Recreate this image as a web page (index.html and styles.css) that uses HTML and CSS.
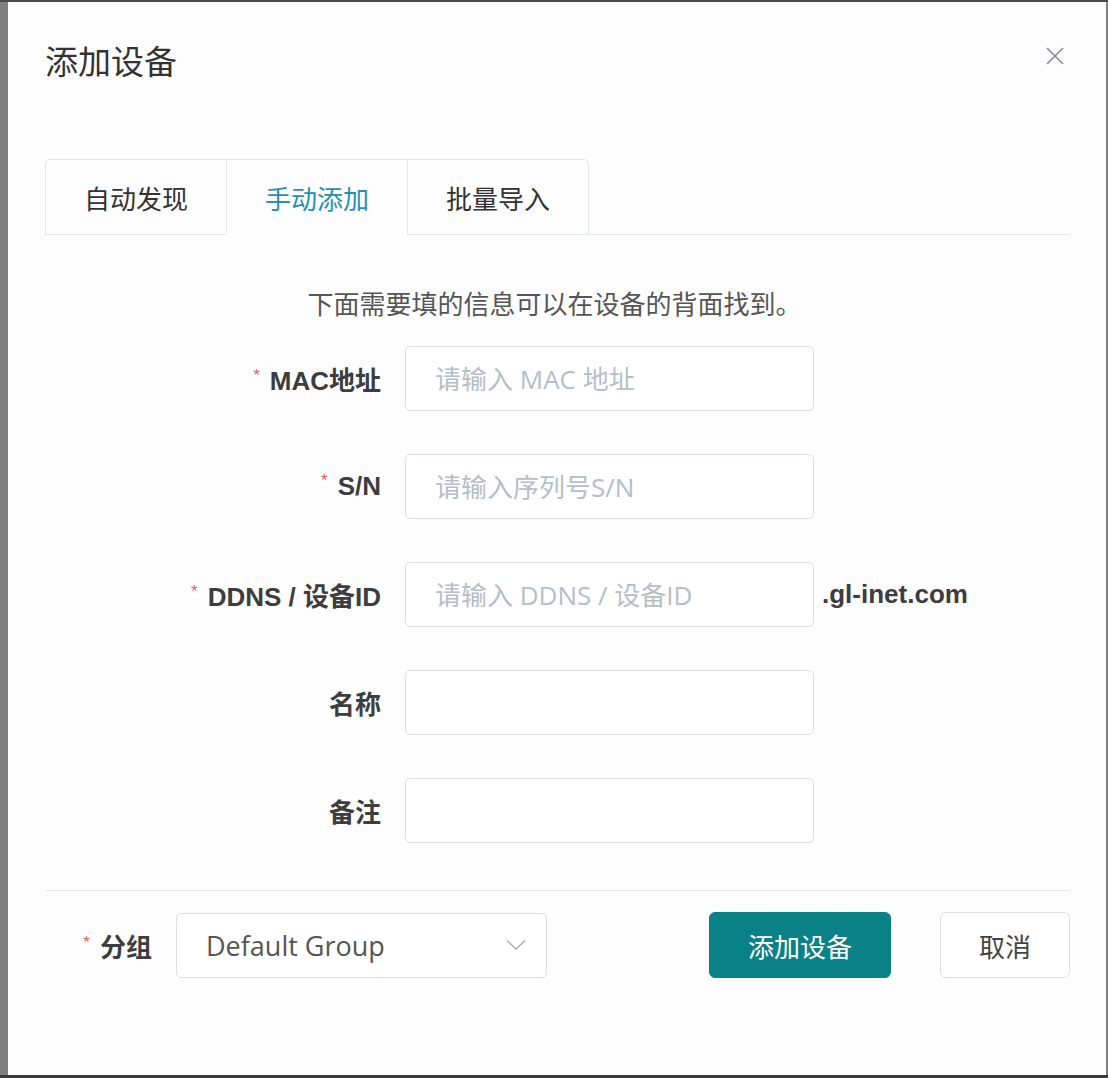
FILE: index.html
```html
<!DOCTYPE html>
<html lang="zh-CN">
<head>
  <meta charset="UTF-8">
  <meta name="viewport" content="width=device-width, initial-scale=1.0">
  <title>添加设备</title>
  <link rel="stylesheet" href="styles.css">
</head>
<body>
  <div class="backdrop">
    <div class="dialog">
      <div class="dialog-header">
        <span class="dialog-title">添加设备</span>
        <svg class="dialog-close" width="20" height="20" viewBox="0 0 20 20">
          <path d="M2 2L18 18M18 2L2 18" stroke="#8a8d94" stroke-width="1.6" fill="none"/>
        </svg>
      </div>

      <div class="tabs">
        <div class="tab">自动发现</div>
        <div class="tab active">手动添加</div>
        <div class="tab">批量导入</div>
      </div>

      <p class="hint">下面需要填的信息可以在设备的背面找到。</p>

      <div class="form">
        <div class="form-row">
          <label class="form-label required">MAC地址</label>
          <input class="input" type="text" placeholder="请输入 MAC 地址">
        </div>
        <div class="form-row">
          <label class="form-label required">S/N</label>
          <input class="input" type="text" placeholder="请输入序列号S/N">
        </div>
        <div class="form-row">
          <label class="form-label required">DDNS / 设备ID</label>
          <input class="input" type="text" placeholder="请输入 DDNS / 设备ID">
          <span class="suffix">.gl-inet.com</span>
        </div>
        <div class="form-row">
          <label class="form-label">名称</label>
          <input class="input" type="text">
        </div>
        <div class="form-row">
          <label class="form-label">备注</label>
          <input class="input" type="text">
        </div>
      </div>

      <div class="dialog-footer">
        <label class="footer-label required">分组</label>
        <div class="select">
          <span>Default Group</span>
          <svg width="20" height="12" viewBox="0 0 20 12">
            <path d="M1 1.5L10 10L19 1.5" stroke="#a8abb2" stroke-width="1.3" fill="none"/>
          </svg>
        </div>
        <div class="buttons">
          <button class="btn btn-primary">添加设备</button>
          <button class="btn">取消</button>
        </div>
      </div>
    </div>
  </div>
</body>
</html>
```

FILE: styles.css
```css
body {
  margin: 0;
  background-color: #7f7f7f;
  font-family: "Noto Sans CJK SC", sans-serif;
}

.backdrop {
  border-top: 2px solid #4a4a4c;
  border-bottom: 3px solid #3a3a3c;
  padding: 0 2px 0 8px;
}

.dialog {
  height: 1073px;
  box-sizing: border-box;
  background-color: #fdfdfe;
  padding: 38px 36px 0 37px;
}

.dialog-header {
  display: flex;
  justify-content: space-between;
  align-items: flex-start;
  height: 40px;
}

.dialog-title {
  font-size: 33px;
  line-height: 40px;
  color: #333;
}

.dialog-close {
  margin-top: 6px;
  margin-right: 5px;
}

.tabs {
  display: flex;
  margin-top: 79px;
  border-bottom: 1px solid #e4e7ed;
}

.tab {
  width: 181px;
  height: 76px;
  margin-bottom: -1px;
  box-sizing: border-box;
  border: 1px solid #e4e7ed;
  border-right: none;
  display: flex;
  justify-content: center;
  align-items: center;
  font-size: 26px;
  color: #333;
  background-color: #fdfdfe;
}

.tab:first-child {
  border-top-left-radius: 5px;
}

.tab:last-child {
  width: 182px;
  border-right: 1px solid #e4e7ed;
  border-top-right-radius: 5px;
}

.tab.active {
  border-bottom-color: #fdfdfe;
  color: #2690b2;
}

.hint {
  margin: 53px 0 0 0;
  padding-right: 6px;
  text-align: center;
  font-size: 26px;
  line-height: 30px;
  color: #555;
}

.form {
  margin-top: 28px;
}

.form-row {
  display: flex;
  align-items: center;
  height: 65px;
  margin-bottom: 43px;
}

.form-row:last-child {
  margin-bottom: 0;
}

.form-label,
.footer-label {
  box-sizing: border-box;
  padding-right: 24px;
  text-align: right;
  font-family: "Liberation Sans", "Noto Sans CJK SC", sans-serif;
  font-weight: bold;
  font-size: 26px;
  color: #3d3d40;
}

.form-label {
  width: 360px;
}

.required::before {
  content: "*";
  color: #e8605c;
  font-size: 17px;
  font-weight: normal;
  margin-right: 10px;
  vertical-align: 9px;
}

.input {
  width: 409px;
  height: 65px;
  box-sizing: border-box;
  border: 1px solid #dcdfe6;
  border-radius: 5px;
  padding: 0 29px;
  font-family: "Open Sans", "Noto Sans CJK SC", sans-serif;
  font-size: 26px;
  color: #555;
  background-color: #fff;
  outline: none;
}

.input::placeholder {
  color: #b6bdca;
}

.suffix {
  margin-left: 8px;
  font-family: "Liberation Sans", sans-serif;
  font-weight: bold;
  font-size: 26px;
  color: #3d3d40;
}

.dialog-footer {
  display: flex;
  align-items: center;
  margin-top: 47px;
  border-top: 1px solid #e4e7ed;
  padding-top: 21px;
}

.footer-label {
  width: 131px;
}

.select {
  width: 371px;
  height: 65px;
  box-sizing: border-box;
  border: 1px solid #dcdfe6;
  border-radius: 5px;
  padding: 0 20px 0 29px;
  display: flex;
  justify-content: space-between;
  align-items: center;
  font-family: "Open Sans", sans-serif;
  font-size: 27px;
  color: #555;
  background-color: #fff;
}

.buttons {
  display: flex;
  gap: 49px;
  margin-left: auto;
}

.btn {
  height: 66px;
  box-sizing: border-box;
  width: 130px;
  border: 1px solid #dcdfe6;
  border-radius: 6px;
  background-color: #fff;
  font-family: "Noto Sans CJK SC", sans-serif;
  font-size: 26px;
  color: #444;
}

.btn-primary {
  width: 182px;
  border-color: #0a8087;
  background-color: #0a8087;
  color: #fff;
}
```
